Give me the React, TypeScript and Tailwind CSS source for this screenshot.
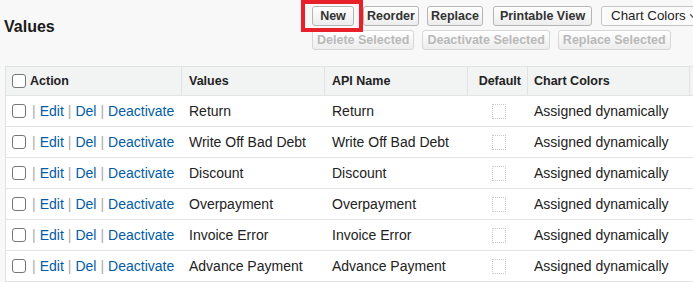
import { ChevronDown } from "lucide-react";

const rows = [
    "Return",
    "Write Off Bad Debt",
    "Discount",
    "Overpayment",
    "Invoice Error",
    "Advance Payment",
];

const cols = "grid grid-cols-[176px_143px_143px_60px_162px_200px]";

const Checkbox = () => (
    <span className="inline-block w-[14px] h-[14px] rounded-[3px] border border-[#767676] bg-white shrink-0" />
);

const Btn = ({
    label,
    disabled,
    pad = "px-[4px]",
}: {
    label: string;
    disabled?: boolean;
    pad?: string;
}) => (
    <button
        className={`block h-[20px] ${pad} py-[2px] leading-[14px] text-[12.5px] font-bold rounded-[3px] border whitespace-nowrap bg-gradient-to-b from-white to-[#ededed] ${
            disabled
                ? "text-[#b9b9b9] border-[#d6d6d6]"
                : "text-[#333] border-[#b5b5b5]"
        }`}
    >
        {label}
    </button>
);

const Sep = () => <span className="text-[#aaa] mx-[4px]">|</span>;

export default function App() {
    return (
        <div className="w-[693px] h-[282px] overflow-hidden bg-[#f8f8f8] font-['Liberation_Sans',Arial,sans-serif]">
            {/* Header: title + buttons */}
            <div className="flex h-[66px]">
                <div className="w-[312px] shrink-0 h-[54px] pl-[4px] flex items-center">
                    <h2 className="text-[16px] font-bold text-[#1a1a1a]">
                        Values
                    </h2>
                </div>
                <div className="flex flex-col gap-[4px] pt-[6px] shrink-0">
                    <div className="flex items-center">
                        <div className="relative flex">
                            <button className="block h-[20px] w-[42px] py-[2px] leading-[14px] text-[12.5px] font-bold rounded-[3px] border border-[#b5b5b5] text-[#333] bg-gradient-to-b from-white to-[#ededed]">
                                New
                            </button>
                            <div className="absolute -left-[11px] -right-[9px] -top-[6px] -bottom-[6px] border-[4px] border-[#e8202a]" />
                        </div>
                        <div className="ml-[9px] flex">
                            <Btn label="Reorder" pad="px-[3px]" />
                        </div>
                        <div className="ml-[8px] flex">
                            <Btn label="Replace" pad="px-[3px]" />
                        </div>
                        <div className="ml-[10px] flex">
                            <Btn label="Printable View" pad="px-[6px]" />
                        </div>
                        <div className="ml-[9px] h-[20px] w-[110px] flex items-center pl-[9px] pr-[12px] rounded-[3px] border border-[#c4c4c4] bg-[#fbfbfb] text-[13.3px] text-[#222] whitespace-nowrap">
                            Chart Colors
                            <ChevronDown className="ml-auto w-[10px] h-[10px] text-[#555]" strokeWidth={3} />
                        </div>
                    </div>
                    <div className="flex items-center gap-[8px]">
                        <Btn label="Delete Selected" disabled />
                        <Btn label="Deactivate Selected" disabled />
                        <Btn label="Replace Selected" disabled />
                    </div>
                </div>
            </div>

            {/* Table */}
            <div className="ml-[5px] border-l border-[#e0e3e5] w-[900px]">
                <div className={`${cols} h-[30px] bg-[#f2f3f3] border-y border-[#e0e3e5] text-[12.5px] font-bold text-[#222]`}>
                    <div className="flex items-center gap-[4px] pl-[6px] border-r border-[#e0e3e5]">
                        <Checkbox />
                        Action
                    </div>
                    <div className="flex items-center pl-[7px] border-r border-[#e0e3e5]">
                        Values
                    </div>
                    <div className="flex items-center pl-[7px] border-r border-[#e0e3e5]">
                        API Name
                    </div>
                    <div className="flex items-center justify-end pr-[6px] border-r border-[#e0e3e5]">
                        Default
                    </div>
                    <div className="flex items-center pl-[6px] border-r border-[#e0e3e5]">
                        Chart Colors
                    </div>
                    <div />
                </div>
                {rows.map((name) => (
                    <div
                        key={name}
                        className={`${cols} h-[31px] bg-white border-b border-[#e3e3e3] text-[14px] text-[#222]`}
                    >
                        <div className="flex items-center pl-[6px] whitespace-nowrap">
                            <Checkbox />
                            <span className="ml-[2px]">
                                <Sep />
                                <a className="text-[#015ba7]">Edit</a>
                                <Sep />
                                <a className="text-[#015ba7]">Del</a>
                                <Sep />
                                <a className="text-[#015ba7]">Deactivate</a>
                            </span>
                        </div>
                        <div className="flex items-center pl-[7px] whitespace-nowrap">{name}</div>
                        <div className="flex items-center pl-[7px] whitespace-nowrap">{name}</div>
                        <div className="flex items-center justify-center pl-[2px]">
                            <span className="w-[14px] h-[15px] border border-dotted border-[#c9c9c9]" />
                        </div>
                        <div className="flex items-center pl-[6px] whitespace-nowrap">
                            Assigned dynamically
                        </div>
                        <div />
                    </div>
                ))}
            </div>
        </div>
    );
}
